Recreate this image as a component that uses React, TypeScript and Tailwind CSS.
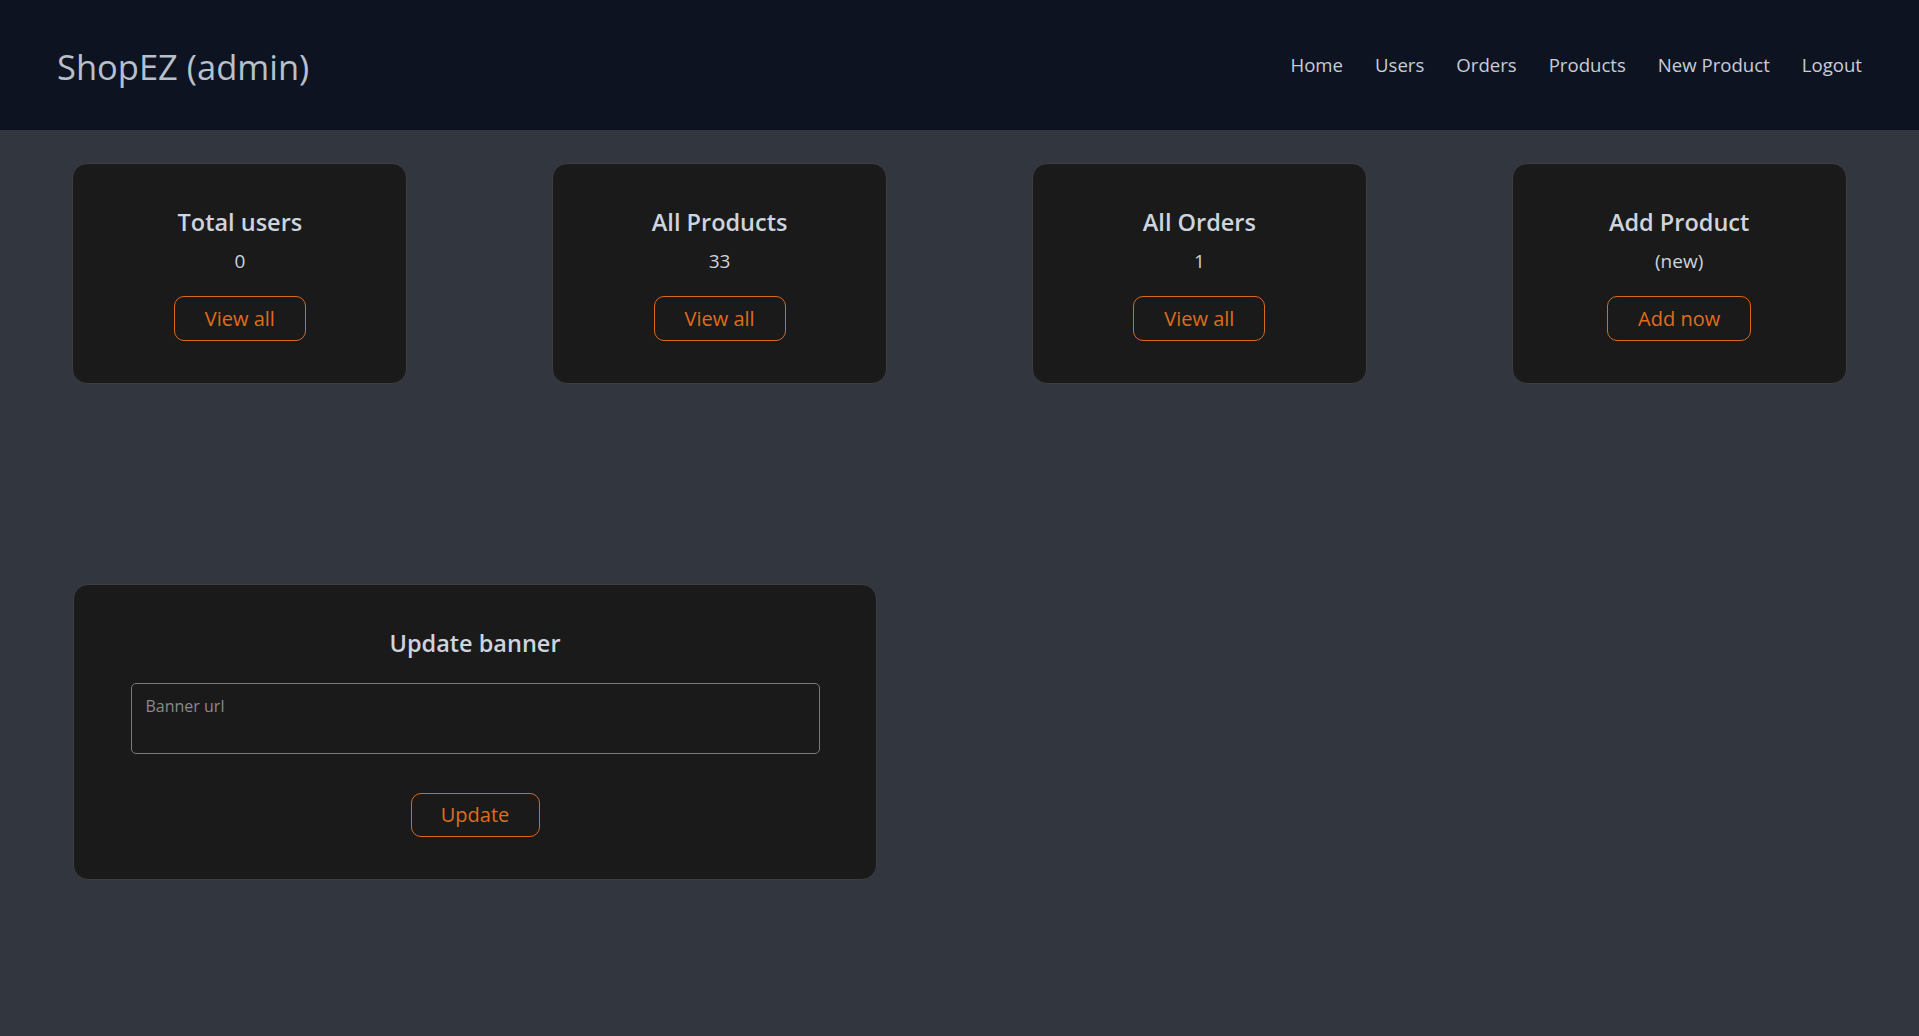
import React from "react";

const font = { fontFamily: '"Open Sans", "Noto Sans", sans-serif' };

type Stat = { title: string; value: string; action: string; w: string };

const stats: Stat[] = [
  { title: "Total users", value: "0", action: "View all", w: "w-[132px]" },
  { title: "All Products", value: "33", action: "View all", w: "w-[132px]" },
  { title: "All Orders", value: "1", action: "View all", w: "w-[132px]" },
  { title: "Add Product", value: "(new)", action: "Add now", w: "w-[144px]" },
];

function StatCard({ s }: { s: Stat }) {
  return (
    <div className="w-[335px] rounded-[15px] border border-[#3c3e42] bg-[#1a1a1a] pt-[43px] pb-[42px] flex flex-col items-center">
      <h4 className="text-[23.5px] leading-[30px] font-semibold text-[#cdd4de]">{s.title}</h4>
      <p className="mt-[10px] text-[19px] leading-[28px] text-[#cdd4de]">{s.value}</p>
      <button
        className={`mt-[21px] h-[45px] ${s.w} rounded-[10px] border border-[#d9691e] text-[20px] leading-[28px] text-[#df6d1e] flex items-center justify-center`}
      >
        {s.action}
      </button>
    </div>
  );
}

export default function App() {
  return (
    <div className="min-h-screen bg-[#31363f]" style={font}>
      <header className="h-[130px] bg-[#0e1321] flex items-center justify-between px-[57px]">
        <h1 className="mt-[3px] text-[34.5px] leading-[47px] font-medium text-[#b6c0cd]">ShopEZ (admin)</h1>
        <nav className="flex items-center gap-[32px] text-[18.6px] text-[#c6cdd8]">
          <a>Home</a>
          <a>Users</a>
          <a>Orders</a>
          <a>Products</a>
          <a>New Product</a>
          <a>Logout</a>
        </nav>
      </header>

      <section className="mt-[33px] flex justify-around">
        {stats.map((s) => (
          <StatCard key={s.title} s={s} />
        ))}
      </section>

      <section className="mt-[200px] ml-[73px] w-[804px] rounded-[15px] border border-[#3c3e42] bg-[#1a1a1a] pt-[43px] pb-[42px] flex flex-col items-center">
        <h4 className="text-[23.5px] leading-[30px] font-semibold text-[#cdd4de]">Update banner</h4>
        <textarea
          placeholder="Banner url"
          className="mt-[25px] h-[71px] w-[689px] resize-none rounded-[5px] border border-[#7a7a7a] bg-[#1a1a1a] px-[14px] pt-[10px] text-[16px] leading-[24px] text-[#cdd4de] placeholder:text-[#8a8a8a] outline-none"
        />
        <button className="mt-[39px] h-[44px] w-[129px] rounded-[10px] border border-[#d9691e] text-[20px] leading-[28px] text-[#df6d1e] flex items-center justify-center">
          Update
        </button>
      </section>
    </div>
  );
}
